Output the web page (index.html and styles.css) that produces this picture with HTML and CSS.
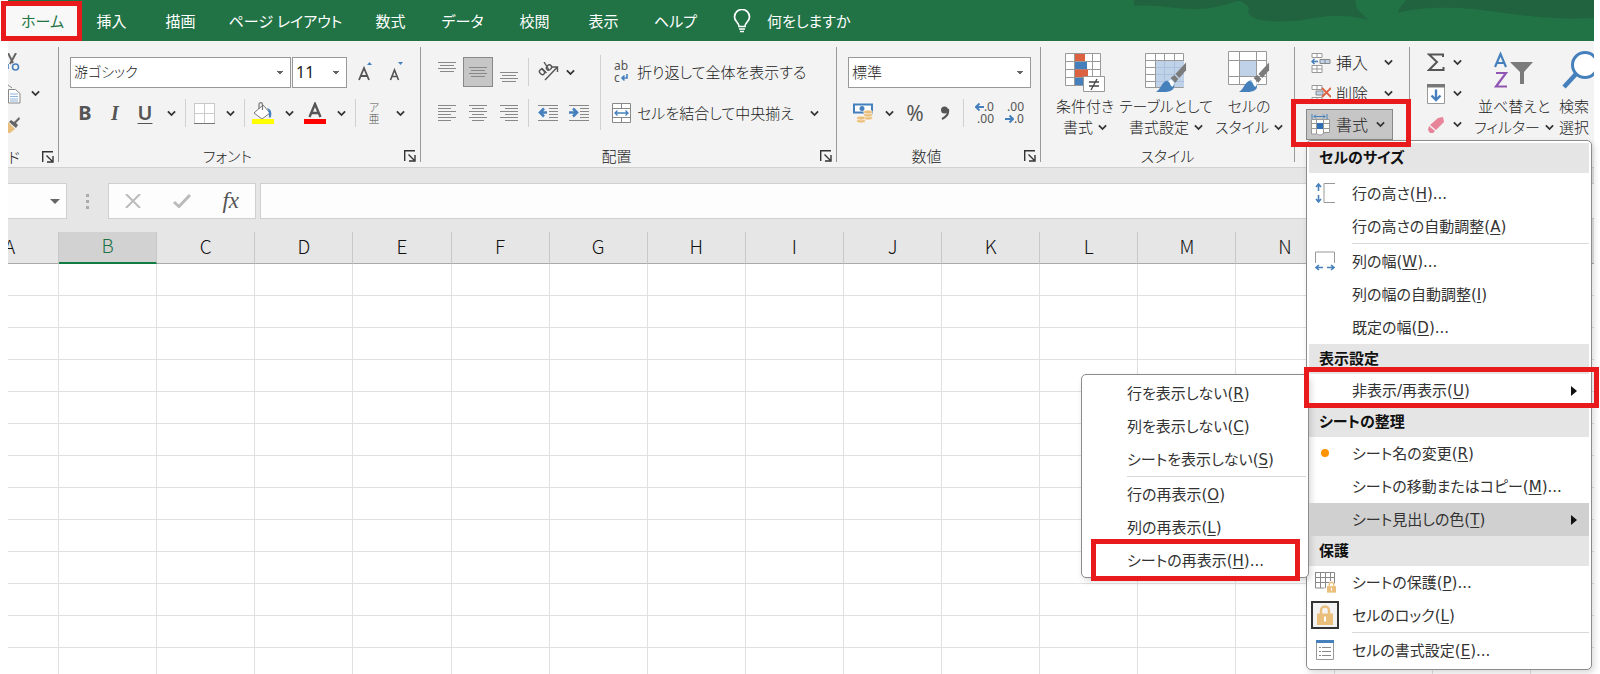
FILE: index.html
```html
<!DOCTYPE html>
<html lang="ja">
<head>
<meta charset="utf-8">
<title>ワークシート</title>
<link rel="stylesheet" href="styles.css">
</head>
<body>
<svg class="defs" aria-hidden="true">
  <symbol id="chev" viewBox="0 0 8 6"><path d="M.8 1.2 4 4.4 7.2 1.2" fill="none" stroke="#333" stroke-width="1.6"/></symbol>
  <symbol id="launch" viewBox="0 0 12 12"><path d="M.7 11V.7H11M4.500 4.500l5.500 5.500M11 5v6H5" fill="none" stroke="#333" stroke-width="1.4"/></symbol>
  <symbol id="brush" viewBox="0 0 32 32"><path d="M31 1v8l-7 8-4-4z" fill="#7b7b7b"/><path d="m19 14 4 4-3 4-5-5z" fill="#7b7b7b"/><path d="M10 20a6 6 0 0 1 8 8c-3 4-10 3.500-18 3.500C5 28 5 23 10 20z" fill="#4580bd"/><path d="M11 20c4 0 3 5 6 6 3-3 1-7-2-7z" fill="#fff"/></symbol>
  <symbol id="lock" viewBox="0 0 16 20"><path d="M4 9V5.500a4 4 0 0 1 8 0V9" fill="none" stroke="#eabf7c" stroke-width="2.400"/><path d="M0 8.500h16V20H0z" fill="#eabf7c"/><path d="M8 11.500v5" stroke="#fff" stroke-width="2"/></symbol>
</svg>
<div class="app">
  <nav class="tabs">
    <svg class="deco" viewBox="0 0 460 41" aria-hidden="true"><path d="M0 6C20 4 40 9 60 9S95 4 106 0H0zM104 0c12 6 12 8 10 12 4 10 24 10 46 9 16-1 28-6 46-5 10 0 18 1 28 4-6-8-14-10-12-20zM264 13c2-8 6-9 8-13h188v18c-50 2-80-4-120-9-30-2-56-2-76 4z" fill="#22633f"/></svg>
    <button class="tab active">ホーム</button><button class="tab">挿入</button><button class="tab">描画</button><button class="tab wide">ページ レイアウト</button><button class="tab">数式</button><button class="tab mid">データ</button><button class="tab">校閲</button><button class="tab">表示</button><button class="tab mid">ヘルプ</button>
    <button class="tell"><svg width="18" height="24" viewBox="0 0 18 24"><path d="M6 17.500c0-4-4.500-5-4.500-9.500a7.500 7.500 0 0 1 15 0c0 4.500-4.500 5.500-4.500 9.500zM6 20h6M7 22.500h4" fill="none" stroke="#fff" stroke-width="1.700"/></svg>何をしますか</button>
  </nav>

  <div class="ribbon">
    <section class="group clip">
      <div class="clipcol">
        <div class="cliprow"><svg width="12" height="20" viewBox="0 0 12 20"><path d="M0 0 5 10M8 0 2 11" stroke="#666" stroke-width="2" fill="none"/><circle cx="7.500" cy="14" r="3" fill="none" stroke="#4580bd" stroke-width="1.600"/><path d="M0 11v5" stroke="#4580bd" stroke-width="1.600"/></svg></div>
        <div class="cliprow"><svg width="13" height="20" viewBox="0 0 13 20"><path d="M0 1l4 3M.5 5.500h7l4.500 4V19H.5z" fill="#fff" stroke="#888"/><path d="M2 10h8M2 12.500h8M2 15h8M2 17h8" stroke="#8fb4da"/></svg><button class="chev" aria-label="コピー"><svg><use href="#chev"/></svg></button></div>
        <div class="cliprow"><svg width="13" height="16" viewBox="0 0 13 16"><path d="M11 0 6 5 3 3 1 5l7 6 2-3-2-2 4-4z" fill="#666"/><path d="m0 5 7 7-5 4H0z" fill="#eabf7c"/></svg></div>
      </div>
      <div class="glabel"><span class="cut">ド</span><button class="launcher" aria-label="クリップボード"><svg><use href="#launch"/></svg></button></div>
    </section>

    <section class="group font">
      <div class="row combos">
        <select class="combo name" aria-label="フォント"><option>游ゴシック</option></select>
        <select class="combo size" aria-label="サイズ"><option>11</option></select>
        <button class="ic grow" aria-label="拡大"><svg width="16" height="20" viewBox="0 0 16 20"><path d="m9 3 2.500-3L14 3z" fill="#4580bd"/><path d="M1 18 6 6l5 12M3 14h6" fill="none" stroke="#555" stroke-width="1.800"/></svg></button>
        <button class="ic" aria-label="縮小"><svg width="16" height="20" viewBox="0 0 16 20"><path d="m9 0 2.500 3L14 0z" fill="#4580bd"/><path d="M1.500 18 5.500 8l4 10M3 14.500h5" fill="none" stroke="#555" stroke-width="1.600"/></svg></button>
      </div>
      <div class="row">
        <button class="ic b">B</button><button class="ic i">I</button><button class="ic u">U</button><button class="chev" aria-label="下線"><svg><use href="#chev"/></svg></button><i class="sep"></i>
        <button class="ic" aria-label="罫線"><svg width="21" height="21" viewBox="0 0 21 21"><path d="M.5.5h20v20H.5z" fill="#fff" stroke="#999" stroke-dasharray="1 1"/><path d="M10.500 1v19M1 10.500h19" stroke="#ccc"/><path d="M0 20.500h21" stroke="#777"/></svg></button><button class="chev" aria-label="罫線の種類"><svg><use href="#chev"/></svg></button><i class="sep"></i>
        <button class="ic" aria-label="塗りつぶし"><svg width="22" height="22" viewBox="0 0 22 22"><path d="m2 11 9-8 7 8-8 6z" fill="#fff" stroke="#777"/><path d="M7 7V2.500C7 0 10.500 0 10.500 2.500V8" fill="none" stroke="#777" stroke-width="1.200"/><path d="M15 6c4 1 5 4 4 9-1 1-2 1-2 0 0-3 0-6-2-9z" fill="#4580bd"/><path d="M0 17h22v5H0z" fill="#ff0"/></svg></button><button class="chev" aria-label="塗りつぶしの色"><svg><use href="#chev"/></svg></button>
        <button class="ic" aria-label="文字色"><svg width="22" height="22" viewBox="0 0 22 22"><path d="M5.500 15 11 2l5.500 13M7.500 11h7" fill="none" stroke="#555" stroke-width="2.400"/><path d="M0 17h22v5H0z" fill="red"/></svg></button><button class="chev" aria-label="フォントの色"><svg><use href="#chev"/></svg></button><i class="sep"></i>
        <button class="ic ruby"><span>ア</span><span>亜</span></button><button class="chev" aria-label="ふりがな"><svg><use href="#chev"/></svg></button>
      </div>
      <div class="glabel"><span>フォント</span><button class="launcher" aria-label="フォントの設定"><svg><use href="#launch"/></svg></button></div>
    </section>

    <section class="group align">
      <div class="cols">
        <div class="stack">
          <div class="row tight">
            <button class="ic" aria-label="上揃え"><svg width="18" height="20" viewBox="0 0 18 20"><path d="M0 .5h18M2 3.500h14M0 6.500h18M2 9.500h14" stroke="#888"/></svg></button>
            <button class="ic on" aria-label="上下中央揃え"><svg width="18" height="20" viewBox="0 0 18 20"><path d="M0 5.500h18M2 8.500h14M0 11.500h18M2 14.500h14" stroke="#888"/></svg></button>
            <button class="ic" aria-label="下揃え"><svg width="18" height="20" viewBox="0 0 18 20"><path d="M0 10.500h18M2 13.500h14M0 16.500h18M2 19.500h14" stroke="#888"/></svg></button>
            <i class="sep"></i>
            <button class="ic orient" aria-label="方向"><svg width="21" height="20" viewBox="0 0 21 20"><g fill="none" stroke="#555" stroke-width="1.400"><ellipse cx="4" cy="10" rx="2.200" ry="2.800" transform="rotate(-45 4 10)"/><path d="m3.500 6 5 5"/><ellipse cx="11" cy="5.500" rx="2.800" ry="2.300" transform="rotate(-45 11 5.500)"/><path d="m6 0 5 8M7 18 19 5.500M14 5h5.500v5"/></g></svg><svg class="cv"><use href="#chev"/></svg></button>
          </div>
          <div class="row tight">
            <button class="ic" aria-label="左揃え"><svg width="18" height="16" viewBox="0 0 18 16"><path d="M0 .5h18M0 3.500h13M0 6.500h18M0 9.500h13M0 12.500h18M0 15.500h13" stroke="#888"/></svg></button>
            <button class="ic" aria-label="中央揃え"><svg width="18" height="16" viewBox="0 0 18 16"><path d="M0 .5h18M3 3.500h12M0 6.500h18M3 9.500h12M0 12.500h18M3 15.500h12" stroke="#888"/></svg></button>
            <button class="ic" aria-label="右揃え"><svg width="18" height="16" viewBox="0 0 18 16"><path d="M0 .5h18M5 3.500h13M0 6.500h18M5 9.500h13M0 12.500h18M5 15.500h13" stroke="#888"/></svg></button>
            <i class="sep"></i>
            <button class="ic" aria-label="インデントを減らす"><svg width="20" height="16" viewBox="0 0 20 16"><path d="M0 .5h20M11 3.500h9M11 6.500h9M11 9.500h9M11 12.500h9M0 15.500h20" stroke="#888"/><path d="M9 7.500H2M6 3.500l-4 4 4 4" fill="none" stroke="#4580bd" stroke-width="2.600"/></svg></button>
            <button class="ic" aria-label="インデントを増やす"><svg width="20" height="16" viewBox="0 0 20 16"><path d="M0 .5h20M11 3.500h9M11 6.500h9M11 9.500h9M11 12.500h9M0 15.500h20" stroke="#888"/><path d="M0 7.500h7M4 3.500l4 4-4 4" fill="none" stroke="#4580bd" stroke-width="2.600"/></svg></button>
          </div>
        </div>
        <i class="longsep"></i>
        <div class="stack">
          <button class="txt"><span class="pic abc"><span>ab</span><span>c<svg width="8" height="8" viewBox="0 0 8 8"><path d="M7 0v4H2M4.500 1.500 2 4l2.500 2.500" fill="none" stroke="#4580bd" stroke-width="1.600"/></svg></span></span>折り返して全体を表示する</button>
          <button class="txt"><span class="pic"><svg width="19" height="20" viewBox="0 0 19 20"><path d="M.5.500h18v19H.5zM.5 5.500h18M.5 14.500h18M9.500 1v4M9.500 15v4" fill="#fff" stroke="#888"/><path d="M3 10h13M5.500 7.500 3 10l2.500 2.500M13.500 7.500 16 10l-2.500 2.500" fill="none" stroke="#4580bd" stroke-width="1.300"/></svg></span><span class="grow1">セルを結合して中央揃え</span><svg class="cv"><use href="#chev"/></svg></button>
        </div>
      </div>
      <div class="glabel"><span>配置</span><button class="launcher" aria-label="配置の設定"><svg><use href="#launch"/></svg></button></div>
    </section>

    <section class="group num">
      <div class="row"><select class="combo fmt" aria-label="表示形式"><option>標準</option></select></div>
      <div class="row">
        <button class="ic" aria-label="通貨"><svg width="20" height="20" viewBox="0 0 20 20"><path d="M1 1.500h18v8H1z" fill="#fff" stroke="#4580bd" stroke-width="2"/><circle cx="9" cy="5.500" r="2.500" fill="#4580bd"/><g fill="#eabf7c" stroke="#fff" stroke-width=".6"><ellipse cx="15" cy="15" rx="4.500" ry="2"/><ellipse cx="15" cy="12" rx="4.500" ry="2"/><ellipse cx="15" cy="9" rx="4.500" ry="2"/><ellipse cx="8" cy="18" rx="4.500" ry="2"/><ellipse cx="8" cy="15" rx="4.500" ry="2"/></g></svg></button><button class="chev" aria-label="通貨の種類"><svg><use href="#chev"/></svg></button>
        <button class="ic pct">%</button>
        <button class="ic" aria-label="桁区切り"><svg width="10" height="14" viewBox="0 0 10 14"><circle cx="4.500" cy="4" r="3.500" fill="#555"/><path d="M8 3c1 5-2 8-6 10" fill="none" stroke="#555" stroke-width="2"/></svg></button>
        <i class="sep"></i>
        <button class="ic dec"><span><svg width="9" height="8" viewBox="0 0 9 8"><path d="M9 4H1M4.500.5 1 4l3.500 3.500" fill="none" stroke="#4580bd" stroke-width="2"/></svg>.0</span><span>.00</span></button>
        <button class="ic dec"><span>.00</span><span><svg width="9" height="8" viewBox="0 0 9 8"><path d="M0 4h8M4.500.5 8 4 4.500 7.500" fill="none" stroke="#4580bd" stroke-width="2"/></svg>.0</span></button>
      </div>
      <div class="glabel"><span>数値</span><button class="launcher" aria-label="数値の設定"><svg><use href="#launch"/></svg></button></div>
    </section>

    <section class="group styles">
      <div class="bigs">
        <button class="big"><svg width="40" height="42" viewBox="0 0 40 42"><path d="M.5 2.500h35v32H.5zM.5 10.500h35M.5 18.500h35M.5 26.500h35M9.500 2v32M18.500 2v32M27.500 2v32" fill="#fff" stroke="#999"/><path d="M10 3h10v7H10zM10 18.500h13V26H10z" fill="#dc6141"/><path d="M10 11h12v7H10zM10 27h9v7h-9z" fill="#4580bd"/><path d="M18.500 25.500h21v15h-21z" fill="#fff" stroke="#999"/><path d="M24 31h10M24 35h10M32 28l-6 11" stroke="#444" stroke-width="1.300"/></svg><span>条件付き</span><span>書式<svg class="cv"><use href="#chev"/></svg></span></button>
        <button class="big"><svg width="42" height="42" viewBox="0 0 42 42"><path d="M.5 2.500h38v34H.5z" fill="#fff"/><path d="M.5 2.500h38v34H.5zM.5 9.500h38M.5 16.500h38M.5 23.500h38M.5 30.500h38M10.500 2v34M19.500 2v34M29.500 2v34" fill="none" stroke="#999"/><path d="M11 10h28v26H11z" fill="#bfd2e8"/><path d="M11 16.500h28M11 23.500h28M11 30.500h28M19.500 10v26M29.500 10v26" stroke="#a9c1dc"/><use href="#brush" x="11" y="10" width="31" height="32"/></svg><span>テーブルとして</span><span>書式設定<svg class="cv"><use href="#chev"/></svg></span></button>
        <button class="big"><svg width="42" height="42" viewBox="0 0 42 42"><path d="M.5.500h38v33H.5zM.5 9.500h38M.5 25.500h38M11.500 0v33M28.500 0v33" fill="#fff" stroke="#999"/><path d="M12 10h16v15H12z" fill="#bfd2e8"/><use href="#brush" x="11" y="10" width="31" height="32"/></svg><span>セルの</span><span>スタイル<svg class="cv"><use href="#chev"/></svg></span></button>
      </div>
      <div class="glabel"><span>スタイル</span></div>
    </section>

    <section class="group cells">
      <button class="cellbtn"><svg width="20" height="20" viewBox="0 0 20 20"><path d="M1 .500h10v4H1zM6 0v4M1 12.500h10v7H1zM6 12v7M1 16h10" fill="#fff" stroke="#999"/><path d="M9 6.500h10v4H9zM14 6v4" fill="#bfd2e8" stroke="#888"/><path d="M7 8.500H1M3.500 6 1 8.500 3.500 11" fill="none" stroke="#4580bd" stroke-width="1.500"/></svg><span>挿入</span><svg class="cv"><use href="#chev"/></svg></button>
      <button class="cellbtn"><svg width="20" height="20" viewBox="0 0 20 20"><path d="M1 1.500h10v4H1zM6 1v4M1 13.500h10v6H1zM6 13v7" fill="#fff" stroke="#999"/><path d="M5 7h7v4H5z" fill="#bfd2e8" stroke="#888"/><path d="m11 4 9 9M20 4l-9 9" stroke="#dc6141" stroke-width="1.800"/></svg><span>削除</span><svg class="cv"><use href="#chev"/></svg></button>
      <div class="drop">
        <button class="cellbtn open"><svg width="20" height="22" viewBox="0 0 20 22"><path d="M1 0v5M16 0v5M3 2.500h11M5 .500l-2 2 2 2M12 .500l2 2-2 2" fill="none" stroke="#4580bd"/><path d="M.5 5.500h18v13H14c-2 0-3 3-5 2.500-2 0-3-2-4-1H.5zM.5 9.500h18M.5 14.500h18M5.500 5v15M12.500 5v15" fill="#fff" stroke="#999"/><path d="M6 9h6v6H6z" fill="#2f6fb5"/></svg><span>書式</span><svg class="cv"><use href="#chev"/></svg></button>
        <div class="menu main" role="menu">
          <h2 class="first">セルのサイズ</h2>
          <button class="item"><span class="mi"><svg width="20" height="20" viewBox="0 0 20 20"><path d="M3.500 1v7M1 4l2.500-3L6 4M3.500 12v7M1 16l2.500 3L6 16" fill="none" stroke="#4580bd" stroke-width="1.600"/><path d="M20 .5H9v19h11" fill="none" stroke="#999"/></svg></span>行の高さ(<u>H</u>)...</button>
          <button class="item">行の高さの自動調整(<u>A</u>)</button>
          <hr>
          <button class="item"><span class="mi"><svg width="20" height="20" viewBox="0 0 20 20"><path d="M1 16.500h7M4 14l-3 2.500L4 19M12 16.500h7M16 14l3 2.500-3 2.500" fill="none" stroke="#4580bd" stroke-width="1.600"/><path d="M.5 12V1h19v11" fill="none" stroke="#999"/></svg></span>列の幅(<u>W</u>)...</button>
          <button class="item">列の幅の自動調整(<u>I</u>)</button>
          <button class="item">既定の幅(<u>D</u>)...</button>
          <h2>表示設定</h2>
          <div class="item-wrap">
            <button class="item framed">非表示/再表示(<u>U</u>)<i class="arrow"></i></button>
            <div class="menu sub" role="menu">
              <button class="item">行を表示しない(<u>R</u>)</button>
              <button class="item">列を表示しない(<u>C</u>)</button>
              <button class="item">シートを表示しない(<u>S</u>)</button>
              <hr>
              <button class="item">行の再表示(<u>O</u>)</button>
              <button class="item">列の再表示(<u>L</u>)</button>
              <button class="item framed">シートの再表示(<u>H</u>)...</button>
            </div>
          </div>
          <h2>シートの整理</h2>
          <button class="item"><span class="mi"><i class="dot"></i></span>シート名の変更(<u>R</u>)</button>
          <button class="item">シートの移動またはコピー(<u>M</u>)...</button>
          <button class="item hover">シート見出しの色(<u>T</u>)<i class="arrow"></i></button>
          <h2>保護</h2>
          <button class="item"><span class="mi"><svg width="21" height="21" viewBox="0 0 21 21"><path d="M.5.500h19v11M.5 0v16h9M.5 5.500h19M.5 10.500h14M5.500 0v16M10.500 0v16M15.500 0v9" fill="none" stroke="#888"/><use href="#lock" x="12" y="9" width="9" height="12"/></svg></span>シートの保護(<u>P</u>)...</button>
          <button class="item"><span class="mi boxed"><svg width="16" height="20"><use href="#lock"/></svg></span>セルのロック(<u>L</u>)</button>
          <hr>
          <button class="item"><span class="mi"><svg width="18" height="20" viewBox="0 0 18 20"><path d="M.5.500h17v19H.5z" fill="#fff" stroke="#999"/><path d="M0 0h18v3H0z" fill="#4580bd"/><path d="M3 7.500h2M3 11.500h2M3 15.500h2M6 7.500h9M6 11.500h9M6 15.500h9" stroke="#888"/></svg></span>セルの書式設定(<u>E</u>)...</button>
        </div>
      </div>
    </section>

    <section class="group edit">
      <div class="editcol">
        <button class="cellbtn" aria-label="合計"><svg width="18" height="19" viewBox="0 0 18 19"><path d="M16 4V1.500H2L10 9l-8 8h14.500v-3" fill="none" stroke="#555" stroke-width="2"/></svg><svg class="cv"><use href="#chev"/></svg></button>
        <button class="cellbtn" aria-label="フィル"><svg width="18" height="20" viewBox="0 0 18 20"><path d="M.5.500h17v19H.5z" fill="#fff" stroke="#999"/><path d="M0 0h18v3.500H0z" fill="#777"/><path d="M9 5.500V16M4.500 11.500 9 16l4.500-4.500" fill="none" stroke="#4580bd" stroke-width="2.400"/></svg><svg class="cv"><use href="#chev"/></svg></button>
        <button class="cellbtn" aria-label="クリア"><svg width="18" height="16" viewBox="0 0 18 16"><path d="m11 1 5-1 1 5-8 8-6-5z" fill="#e8849a"/><path d="m2 9 6 5-2 2H3l-2-3z" fill="#e8849a"/></svg><svg class="cv"><use href="#chev"/></svg></button>
      </div>
      <button class="big sort"><svg width="40" height="42" viewBox="0 0 40 42"><path d="M1 16 6.500 3 12 16M3 12h7" fill="none" stroke="#4580bd" stroke-width="2.200"/><path d="M2 22h10L2 35.500h11" fill="none" stroke="#9156b4" stroke-width="2.200"/><path d="M16 11h23l-9 10v12h-4V21z" fill="#7b7b7b"/></svg><span>並べ替えと</span><span>フィルター<svg class="cv"><use href="#chev"/></svg></span></button>
      <button class="big find"><svg width="44" height="42" viewBox="0 0 44 42"><circle cx="26" cy="14" r="12.500" fill="#fff" stroke="#4580bd" stroke-width="3"/><path d="M17 23 5 36" stroke="#4580bd" stroke-width="4.500"/></svg><span>検索</span><span>選択</span></button>
    </section>
  </div>

  <div class="fbar">
    <div class="namebox"><input aria-label="名前ボックス"><i class="tri"></i></div>
    <div class="dots"><i></i><i></i><i></i></div>
    <div class="fx">
      <button aria-label="キャンセル"><svg width="16" height="14" viewBox="0 0 16 14"><path d="M1 0l14 14M15 0 1 14" stroke="#bbb" stroke-width="2"/></svg></button>
      <button aria-label="入力"><svg width="18" height="14" viewBox="0 0 18 14"><path d="m1 8 5 4.500L17 1" fill="none" stroke="#bbb" stroke-width="3"/></svg></button>
      <button class="fn">fx</button>
    </div>
    <input class="formula" aria-label="数式バー">
  </div>

  <div class="sheet"><table><thead><tr></tr></thead><tbody></tbody></table></div>
</div>
<script src="grid.js"></script>
</body>
</html>
```
FILE: grid.js
```javascript
const letters = 'ABCDEFGHIJKLMNOPQ'.split('');
document.querySelector('.sheet thead tr').innerHTML =
  letters.map(l => `<th scope="col"${l === 'B' ? ' class="sel"' : ''}>${l}</th>`).join('');
document.querySelector('.sheet tbody').innerHTML =
  ('<tr>' + '<td></td>'.repeat(letters.length) + '</tr>').repeat(13);
```
FILE: styles.css
```css
* { box-sizing: border-box; }
body {
  margin: 0;
  background: #fff;
  color: #222;
  font: 300 16px/20px "Noto Sans", "Noto Sans CJK JP", sans-serif;
  font-feature-settings: "palt";
}
button, input, select { font: inherit; font-feature-settings: inherit; color: inherit; margin: 0; padding: 0; }
button { background: none; border: 0; white-space: nowrap; }
svg { display: block; flex: none; }
.defs { position: absolute; width: 0; height: 0; }
.app { height: 100vh; padding: 0 6px 0 8px; display: flex; flex-direction: column; overflow: hidden; }

/* Tab strip */
.tabs { position: relative; height: 41px; flex: none; display: flex; background: #217346; color: #fff; font-size: 15px; font-weight: 400; }
.deco { position: absolute; right: 0; top: 0; width: 460px; height: 41px; }
.tab { width: 69px; position: relative; }
.tab.wide { width: 141px; }
.tab.mid { width: 75px; }
.tab.active { color: #217346; isolation: isolate; }
.tab.active::after { content: ""; position: absolute; inset: 1px -5px 0 -7px; border: 5px solid #e81a1c; background: #f8f8f8; z-index: -1; }
.tell { display: flex; align-items: center; gap: 16px; padding-left: 20px; position: relative; }

/* Ribbon */
.ribbon { position: relative; z-index: 2; flex: none; display: flex; padding: 6px 0 5px; background: #f3f3f3; border-bottom: 1px solid #d2d2d2; }
.group { flex: none; height: 115px; display: flex; flex-direction: column; border-right: 1px solid #999; padding: 10px 0 0 11px; gap: 11px; }
.glabel { margin: auto 0 0 -11px; height: 12px; display: flex; align-items: center; font-size: 15px; }
.glabel span { flex: 1; text-align: center; }
.launcher { width: 24px; padding-right: 4px; display: flex; justify-content: flex-end; }
.launcher svg { width: 12px; height: 12px; }
.row { display: flex; align-items: center; height: 30px; }
.tight { gap: 1px; }
.ic { width: 30px; height: 30px; display: flex; align-items: center; justify-content: center; color: #555; }
.ic.on { background: #c6c6c6; border: 1px solid #888; }
.chev { width: 22px; height: 30px; display: flex; align-items: center; justify-content: center; }
.chev svg, .cv { width: 9px; height: 7px; }
.sep { width: 7px; height: 28px; background: linear-gradient(#d0d0d0, #d0d0d0) center / 1px 100% no-repeat; }
.longsep { width: 1px; height: 75px; margin: 0 8px 0 6px; background: #d0d0d0; }
.b, .u, .i { font-size: 20px; font-weight: 700; }
.i { font-family: "Liberation Serif", serif; font-style: italic; }
.u { text-decoration: underline; text-decoration-thickness: 1px; text-underline-offset: 3px; font-weight: 600; }
.ruby { flex-direction: column; font-size: 11px; line-height: 11px; }
.pct { font-size: 21px; font-weight: 400; }
.dec { flex-direction: column; font-size: 12px; line-height: 12px; font-weight: 400; align-items: flex-end; padding-right: 3px; }
.dec span { display: flex; align-items: center; }

.combo {
  appearance: none;
  height: 31px;
  border: 1px solid #999;
  border-radius: 0;
  padding: 0 3px;
  color: #222;
  background: #fff no-repeat;
  background-image: linear-gradient(to bottom left, #666 50%, transparent 51%), linear-gradient(to bottom right, #666 50%, transparent 51%);
  background-size: 3px 3px;
  background-position: right 10px center, right 7px center;
}
.combo.name { width: 221px; font-size: 14px; }
.combo.size { width: 55px; font-weight: 400; }
.combo.fmt { width: 183px; font-size: 15px; }
.combos { gap: 1px; }
.grow { margin-left: 3px; }

.clip { width: 51px; padding: 0; }
.clipcol { display: flex; flex-direction: column; }
.cliprow { display: flex; align-items: center; height: 31px; gap: 3px; }
.clip .glabel { margin-left: 0; }
.clip .glabel .cut { text-align: left; }
.font { width: 362px; }
.align { width: 416px; }
.cols { display: flex; align-items: center; height: 71px; }
.stack { display: flex; flex-direction: column; gap: 11px; }
.orient { width: 46px; justify-content: flex-start; padding-left: 5px; gap: 7px; }
.txt { height: 30px; display: flex; align-items: center; font-size: 15px; }
.pic { width: 28px; display: flex; padding-left: 3px; }
.abc { flex-direction: column; line-height: 12px; font-size: 12px; font-weight: 400; padding-left: 5px; color: #555; }
.abc span { display: flex; align-items: center; }
.grow1 { width: 173px; text-align: left; }
.num { width: 204px; }

.bigs { display: flex; gap: 1px; }
.styles { width: 254px; padding: 4px 0 0 4px; }
.styles .glabel { margin-left: -4px; }
.big { display: flex; flex-direction: column; align-items: center; font-size: 15px; }
.big > svg { margin-bottom: 3px; }
.big span { display: flex; align-items: center; gap: 5px; line-height: 21px; }
.styles .big { width: 80px; }
.styles .big:last-child { width: 84px; }
.cells { width: 115px; gap: 0; padding-top: 0; }
.cellbtn { width: 87px; height: 31px; display: flex; align-items: center; padding: 0 0 0 5px; gap: 5px; }
.cellbtn span { width: 45px; text-align: left; }
.cellbtn.open { background: #c6c6c6; border: 1px solid #888; padding-left: 4px; }
.cellbtn.open span { width: 35px; }
.drop { position: relative; }
.drop::after { content: ""; position: absolute; inset: -10px -2px -7px -15px; border: 5px solid #e81a1c; z-index: 5; pointer-events: none; }
.edit { flex: 1 1 0; min-width: 0; flex-direction: row; overflow: hidden; border: 0; padding: 0 0 0 12px; gap: 0; }
.editcol { width: 56px; flex: none; }
.editcol .cellbtn { width: 50px; gap: 8px; }
.edit .big { flex: none; padding-top: 4px; justify-content: flex-start; }
.sort { width: 72px; }
.find { margin-left: 9px; }
.edit .find { align-items: flex-start; }

/* Menus */
.menu { position: absolute; background: #fff; border: 1px solid #8c8c8c; border-radius: 5px; box-shadow: 2px 3px 6px rgba(0, 0, 0, .15); padding: 2px; font-family: "DejaVu Sans", "Noto Sans CJK JP", sans-serif; font-size: 15px; font-weight: 400; }
.main { top: 31px; left: 0; width: 286px; z-index: 3; }
.menu h2 { margin: 0; height: 30px; padding-left: 10px; background: #e5e5e5; font: inherit; font-weight: 700; line-height: 30px; color: #111; }
.menu h2.first { margin-bottom: 4px; }
.item { position: relative; width: 100%; height: 33px; display: flex; align-items: center; padding-left: 43px; text-align: left; color: #333; }
.item u { text-underline-offset: 2px; text-decoration-thickness: 1px; }
.item.hover { background: #d0d0d0; }
.mi { position: absolute; left: 2px; top: 2px; width: 28px; height: 28px; display: flex; align-items: center; justify-content: center; }
.boxed { border: 2px solid #333; background: #f3f3f3; }
.dot { width: 8px; height: 8px; border-radius: 50%; background: #ff9300; }
.menu hr { height: 1px; margin: 0 0 1px 43px; border: 0; background: #d8d8d8; }
.arrow { margin-left: auto; margin-right: 12px; border: 5px solid transparent; border-left: 6px solid #111; border-right: 0; }
.item-wrap { position: relative; }
.sub { right: 100%; top: 0; width: 228px; padding-bottom: 0; }
.framed::after { content: ""; position: absolute; inset: -7px -10px -1px -5px; border: 5px solid #e81a1c; z-index: 6; pointer-events: none; }
.sub .framed::after { inset: -5px 6px -4px 7px; }

/* Formula bar */
.fbar { flex: none; display: flex; align-items: stretch; height: 64px; padding: 15px 0 13px; background: #e6e6e6; }
.fbar > * { border: 1px solid #d0d0d0; background: #fdfdfd; }
.namebox { width: 59px; border-left: 0; display: flex; align-items: center; }
.namebox input { width: 40px; border: 0; background: none; }
.tri { border: 5px solid transparent; border-top-color: #666; border-bottom: 0; margin-left: 2px; }
.fbar .dots { width: 41px; border: 0; background: none; display: flex; flex-direction: column; gap: 3px; align-items: center; justify-content: center; }
.dots i { width: 3px; height: 3px; background: #aaa; }
.fx { width: 148px; display: flex; margin-right: 4px; }
.fx button { flex: 1; display: flex; align-items: center; justify-content: center; }
.fn { font: italic 400 23px "Liberation Serif", serif; color: #555; }
.formula { flex: 1; min-width: 0; border-right: 0; }

/* Sheet */
.sheet { flex: 1; min-height: 0; overflow: hidden; }
.sheet table { margin-left: -47px; width: 1668px; table-layout: fixed; border-collapse: separate; border-spacing: 0; }
.sheet th { height: 32px; padding: 0 0 4px; background: #e6e6e6; border-right: 1px solid #c8c8c8; border-bottom: 1px solid #aaa; font-family: "Noto Sans CJK JP", sans-serif; font-weight: 300; font-size: 19px; line-height: 26px; color: #111; }
.sheet th.sel { background: #d2d2d2; border-bottom: 2px solid #107c41; color: #217346; }
.sheet td { height: 32px; padding: 0; border-right: 1px solid #e0e0e0; border-bottom: 1px solid #e0e0e0; }
```
